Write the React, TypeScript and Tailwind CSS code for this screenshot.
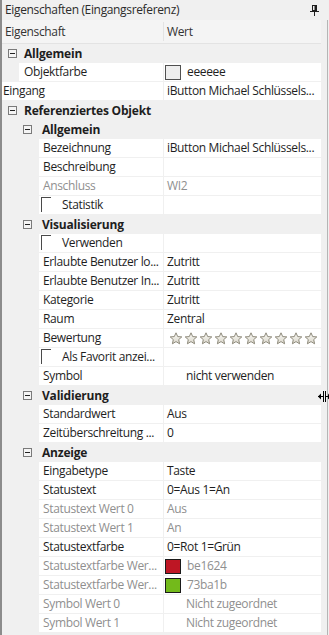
import React from "react";

type Row =
  | { kind: "cat"; level: 0 | 1; label: string }
  | {
      kind: "prop";
      level: 0 | 1 | 2;
      label: string;
      value?: string;
      disabled?: boolean;
      valueDisabled?: boolean;
      check?: boolean;
      swatch?: string;
      stars?: boolean;
      indentValue?: boolean;
    };

const rows: Row[] = [
  { kind: "cat", level: 0, label: "Allgemein" },
  { kind: "prop", level: 1, label: "Objektfarbe", swatch: "#eeeeee", value: "eeeeee" },
  { kind: "prop", level: 0, label: "Eingang", value: "iButton Michael Schlüssels..." },
  { kind: "cat", level: 0, label: "Referenziertes Objekt" },
  { kind: "cat", level: 1, label: "Allgemein" },
  { kind: "prop", level: 2, label: "Bezeichnung", value: "iButton Michael Schlüssels..." },
  { kind: "prop", level: 2, label: "Beschreibung", value: "" },
  { kind: "prop", level: 2, label: "Anschluss", value: "WI2", disabled: true, valueDisabled: true },
  { kind: "prop", level: 2, label: "Statistik", check: true },
  { kind: "cat", level: 1, label: "Visualisierung" },
  { kind: "prop", level: 2, label: "Verwenden", check: true },
  { kind: "prop", level: 2, label: "Erlaubte Benutzer lo...", value: "Zutritt" },
  { kind: "prop", level: 2, label: "Erlaubte Benutzer In...", value: "Zutritt" },
  { kind: "prop", level: 2, label: "Kategorie", value: "Zutritt" },
  { kind: "prop", level: 2, label: "Raum", value: "Zentral" },
  { kind: "prop", level: 2, label: "Bewertung", stars: true },
  { kind: "prop", level: 2, label: "Als Favorit anzei...", check: true },
  { kind: "prop", level: 2, label: "Symbol", value: "nicht verwenden", indentValue: true },
  { kind: "cat", level: 1, label: "Validierung" },
  { kind: "prop", level: 2, label: "Standardwert", value: "Aus" },
  { kind: "prop", level: 2, label: "Zeitüberschreitung ...", value: "0" },
  { kind: "cat", level: 1, label: "Anzeige" },
  { kind: "prop", level: 2, label: "Eingabetype", value: "Taste" },
  { kind: "prop", level: 2, label: "Statustext", value: "0=Aus 1=An" },
  { kind: "prop", level: 2, label: "Statustext Wert 0", value: "Aus", disabled: true, valueDisabled: true },
  { kind: "prop", level: 2, label: "Statustext Wert 1", value: "An", disabled: true, valueDisabled: true },
  { kind: "prop", level: 2, label: "Statustextfarbe", value: "0=Rot 1=Grün" },
  { kind: "prop", level: 2, label: "Statustextfarbe Wer...", disabled: true, valueDisabled: true, swatch: "#be1624", value: "be1624" },
  { kind: "prop", level: 2, label: "Statustextfarbe Wer...", disabled: true, valueDisabled: true, swatch: "#73ba1b", value: "73ba1b" },
  { kind: "prop", level: 2, label: "Symbol Wert 0", disabled: true, valueDisabled: true, value: "Nicht zugeordnet", indentValue: true },
  { kind: "prop", level: 2, label: "Symbol Wert 1", disabled: true, valueDisabled: true, value: "Nicht zugeordnet", indentValue: true },
];

function MinusBox() {
  return (
    <div className="w-[9px] h-[9px] border border-[#7a7a7a] bg-[#f4f4f4] flex items-center justify-center shrink-0">
      <div className="w-[5px] h-[1px] bg-[#222]" />
    </div>
  );
}

function Star() {
  return (
    <svg width="14" height="13" viewBox="0 0 14 13" className="shrink-0">
      <defs>
        <linearGradient id="sg" x1="0" y1="0" x2="0" y2="1">
          <stop offset="0" stopColor="#fbfaf6" />
          <stop offset="1" stopColor="#d9d6ca" />
        </linearGradient>
      </defs>
      <path
        d="M7 0.8 L8.7 4.6 L12.8 4.9 L9.7 7.6 L10.6 11.8 L7 9.6 L3.4 11.8 L4.3 7.6 L1.2 4.9 L5.3 4.6 Z"
        fill="url(#sg)"
        stroke="#8e8a7b"
        strokeWidth="1"
        strokeLinejoin="round"
      />
    </svg>
  );
}

function CatRow({ level, label }: { level: 0 | 1; label: string }) {
  return (
    <div className="h-[19px] flex items-center">
      <div className={level === 0 ? "w-[6px] shrink-0" : "w-[21px] shrink-0"} />
      <MinusBox />
      <div className={level === 0 ? "w-[7px] shrink-0" : "w-[10px] shrink-0"} />
      <span className="font-bold text-[#1e1e1e] whitespace-nowrap tracking-[-0.2px]">{label}</span>
    </div>
  );
}

function PropRow({ r }: { r: Extract<Row, { kind: "prop" }> }) {
  const gutter = r.level === 0 ? "w-0" : r.level === 1 ? "w-[17px]" : "w-[37px]";
  const namePad = r.level === 0 ? "pl-[1px]" : r.level === 1 ? "pl-[5px]" : "pl-[4px]";
  const nameColor = r.disabled ? "text-[#8f8f8f]" : "text-[#1e1e1e]";
  const valColor = r.valueDisabled ? "text-[#8f8f8f]" : "text-[#1e1e1e]";
  return (
    <div className="h-[19px] flex">
      <div className={`${gutter} shrink-0`} />
      <div className="w-[161px] flex-1 bg-white border-b border-[#f0f0f0] flex items-center min-w-0 relative">
        {r.check ? (
          <>
            <div className="absolute left-[2px] top-[1px] w-[10px] h-[15px] border-l border-t border-[#4a4a4a]" />
            <span className={`pl-[23px] whitespace-nowrap ${nameColor}`}>{r.label}</span>
          </>
        ) : (
          <span className={`${namePad} whitespace-nowrap ${nameColor}`}>{r.label}</span>
        )}
      </div>
      <div className="w-[1px] bg-[#f0f0f0] shrink-0" />
      <div className="w-[157px] shrink-0 bg-white border-b border-[#f0f0f0] flex items-center">
        {r.stars ? (
          <div className="flex items-center gap-[1px] pl-[5px]">
            {Array.from({ length: 10 }).map((_, i) => (
              <Star key={i} />
            ))}
          </div>
        ) : r.swatch ? (
          <div className="flex items-center pl-[1px]">
            <div
              className={`w-[16px] h-[15px] border ${r.swatch === "#eeeeee" ? "border-[#505050]" : "border-[#1a1a1a]"} shrink-0`}
              style={{ backgroundColor: r.swatch }}
            />
            <span className={`pl-[6px] whitespace-nowrap ${valColor}`}>{r.value}</span>
          </div>
        ) : (
          <span className={`${r.indentValue ? "pl-[22px]" : "pl-[3px]"} whitespace-nowrap ${valColor}`}>{r.value}</span>
        )}
      </div>
    </div>
  );
}

export default function App() {
  return (
    <div
      className="w-[329px] h-[635px] bg-[#f0f0f0] border-l-2 border-[#8c8c8c] flex flex-col overflow-hidden relative text-[12px] tracking-[-0.35px] leading-none"
      style={{ fontFamily: '"Open Sans", "Noto Sans", sans-serif' }}
    >
      {/* Title bar */}
      <div className="h-[20px] flex items-center justify-between pl-[3px] pr-[10px] shrink-0">
        <span className="text-[#2b2b2b] whitespace-nowrap">Eigenschaften (Eingangsreferenz)</span>
        <svg width="9" height="11" viewBox="0 0 9 11">
          <rect x="2.5" y="0.5" width="4" height="5" fill="none" stroke="#1e1e1e" />
          <rect x="4.5" y="1" width="1.5" height="4" fill="#1e1e1e" />
          <line x1="0" y1="6.5" x2="9" y2="6.5" stroke="#1e1e1e" />
          <line x1="4.5" y1="7" x2="4.5" y2="11" stroke="#1e1e1e" />
        </svg>
      </div>
      {/* Grid */}
      <div className="flex-1 flex">
        <div className="w-[319px] flex flex-col">
          <div className="h-[24px] flex border-b border-[#e3e3e3] bg-[#f4f4f4]">
            <div className="w-[161px] flex items-center pl-[3px] text-[#333]">Eigenschaft</div>
            <div className="w-[1px] bg-[#e3e3e3] my-[2px]" />
            <div className="flex-1 flex items-center pl-[3px] text-[#333]">Wert</div>
          </div>
          {rows.map((r, i) =>
            r.kind === "cat" ? <CatRow key={i} level={r.level} label={r.label} /> : <PropRow key={i} r={r} />
          )}
        </div>
        <div className="w-[6px]" />
        <div className="w-[1px] bg-[#b5b5b5]" />
      </div>
      {/* resize cursor overlay */}
      <svg className="absolute left-[316px] top-[391px]" width="13" height="11" viewBox="0 0 13 11">
        <line x1="5.5" y1="0" x2="5.5" y2="11" stroke="#000" />
        <line x1="7.5" y1="0" x2="7.5" y2="11" stroke="#000" />
        <line x1="0" y1="5.5" x2="5" y2="5.5" stroke="#000" />
        <line x1="8" y1="5.5" x2="13" y2="5.5" stroke="#000" />
        <path d="M0 5.5 L3 2.5 L3 8.5 Z" fill="#000" />
        <path d="M13 5.5 L10 2.5 L10 8.5 Z" fill="#000" />
      </svg>
    </div>
  );
}
